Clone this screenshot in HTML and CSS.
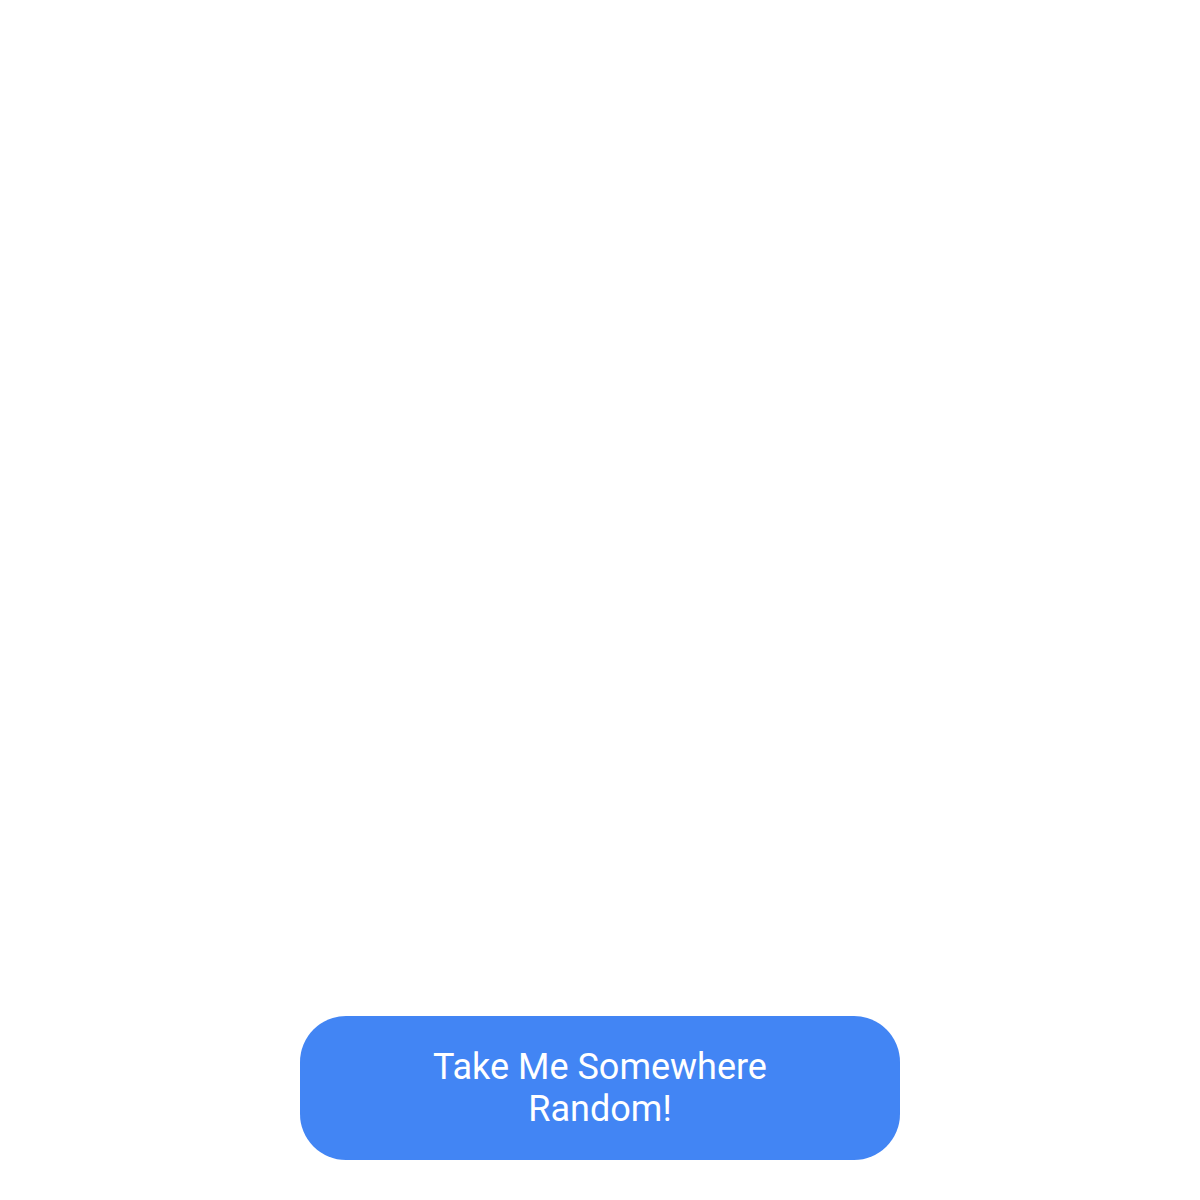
FILE: index.html
```html
<!DOCTYPE html>
<html lang="en">
<head>
  <meta charset="UTF-8">
  <meta name="viewport" content="width=device-width, initial-scale=1.0">
  <title>Random</title>
  <link rel="stylesheet" href="styles.css">
</head>
<body>
  <div class="main-content">
    <button class="random-btn">Take Me Somewhere Random!</button>
  </div>
</body>
</html>
```

FILE: styles.css
```css
body {
  margin: 0;
  font-family: Roboto, 'Noto Sans', Arial, sans-serif;
  background-color: #ffffff;
  min-height: 100vh;
  display: flex;
  flex-direction: column;
}

.main-content {
  flex: 1;
  display: flex;
  flex-direction: column;
  justify-content: flex-end;
  align-items: center;
  padding-bottom: 40px;
}

.random-btn {
  width: 600px;
  height: 144px;
  padding: 0 110px;
  background-color: #4285f4;
  color: white;
  border: none;
  border-radius: 46px;
  font-family: Roboto, Arial, sans-serif;
  font-size: 36px;
  line-height: 42px;
  text-align: center;
  cursor: pointer;
}
```
